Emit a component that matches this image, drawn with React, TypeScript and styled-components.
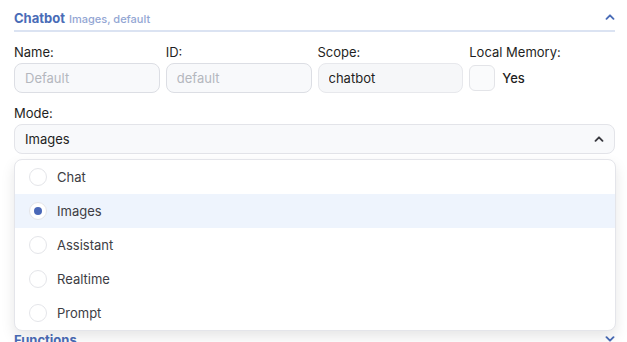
import React, { useState } from "react";
import styled, { createGlobalStyle } from "styled-components";

const GlobalStyle = createGlobalStyle`
  html, body {
    margin: 0;
    padding: 0;
    background: #ffffff;
    font-family: Inter, "Liberation Sans", sans-serif;
    -webkit-font-smoothing: antialiased;
  }
  * {
    box-sizing: border-box;
  }
`;

const Page = styled.div`
  padding: 1px 12px 0 14px;
`;

const Section = styled.section`
  position: relative;
`;

const SectionHeader = styled.div`
  display: flex;
  align-items: center;
  justify-content: space-between;
  height: 25px;
  margin-top: 6px;
  border-bottom: 2px solid #dbe3f2;
`;

const Title = styled.div`
  display: flex;
  align-items: baseline;
  gap: 4px;
  padding-top: 1px;
  padding-bottom: 3px;
`;

const TitleMain = styled.span`
  font-size: 13px;
  font-weight: 700;
  color: #4a6cb7;
`;

const TitleSub = styled.span`
  font-size: 11px;
  font-weight: 500;
  color: #93a6d3;
`;

const ChevronButton = styled.span<{ $down?: boolean }>`
  display: flex;
  width: 12px;
  height: 12px;
  margin-right: -1px;
  margin-bottom: 3px;
  color: #4a6cb7;
  transform: ${(p) => (p.$down ? "rotate(180deg)" : "none")};
`;

const Body = styled.div`
  padding-top: 12px;
  padding-bottom: 169px;
`;

const FieldGrid = styled.div`
  display: grid;
  grid-template-columns: repeat(4, 1fr);
  column-gap: 6px;
`;

const Field = styled.div`
  display: flex;
  flex-direction: column;
  gap: 3px;
`;

const Label = styled.label`
  font-size: 13px;
  line-height: 16px;
  color: #1f1f23;
`;

const Input = styled.input`
  height: 30px;
  width: 100%;
  padding: 0 10px;
  border: 1px solid #dcdee4;
  border-radius: 8px;
  background: #f8f9fb;
  font-family: inherit;
  font-size: 13px;
  color: #1f1f23;
  outline: none;

  &::placeholder {
    color: #b4b7be;
  }

  &:read-only {
    border-color: #e7e8ec;
    background: #f6f7f9;
  }
`;

const CheckRow = styled.div`
  display: flex;
  align-items: center;
  gap: 7px;
  height: 30px;
`;

const CheckBox = styled.span`
  width: 26px;
  height: 26px;
  border: 1px solid #e3e4e8;
  border-radius: 6px;
  background: #fafbfc;
`;

const CheckText = styled.span`
  font-size: 13px;
  font-weight: 500;
  color: #1f1f23;
`;

const ModeField = styled(Field)`
  position: relative;
  margin-top: 12px;
`;

const SelectBox = styled.div`
  display: flex;
  align-items: center;
  justify-content: space-between;
  height: 30px;
  padding: 0 8px 0 10px;
  border: 1px solid #e3e4e9;
  border-radius: 8px;
  background: #f8f9fb;
  font-size: 13px;
  color: #1f1f23;
`;

const SelectChevron = styled.span`
  display: flex;
  width: 12px;
  height: 12px;
  margin-right: 1px;
  color: #3a3a40;
`;

const Menu = styled.ul`
  position: absolute;
  top: 54px;
  left: 0;
  right: -1px;
  margin: 0;
  padding: 0;
  list-style: none;
  background: #ffffff;
  border: 1px solid #e4e5ea;
  border-radius: 8px;
  box-shadow: 0 6px 14px rgba(0, 0, 0, 0.1);
  overflow: hidden;
  z-index: 10;
`;

const MenuItem = styled.li<{ $active?: boolean }>`
  display: flex;
  align-items: center;
  gap: 10px;
  height: 34px;
  padding-left: 14px;
  background: ${(p) => (p.$active ? "#eef4fd" : "transparent")};
  font-size: 13px;
  color: #3d3d44;
`;

const Radio = styled.span<{ $checked?: boolean }>`
  display: flex;
  align-items: center;
  justify-content: center;
  width: 18px;
  height: 18px;
  border: 1px solid #e4e5e9;
  border-radius: 50%;
  background: #ffffff;

  &::after {
    content: "";
    display: ${(p) => (p.$checked ? "block" : "none")};
    width: 8px;
    height: 8px;
    border-radius: 50%;
    background: #4a68b8;
  }
`;

const Chevron = () => (
  <svg viewBox="0 0 12 12" width="12" height="12" fill="none">
    <path
      d="M2.5 7.8L6 4.3l3.5 3.5"
      stroke="currentColor"
      strokeWidth="1.9"
      strokeLinecap="round"
      strokeLinejoin="round"
    />
  </svg>
);

const modes = ["Chat", "Images", "Assistant", "Realtime", "Prompt"];

export default function App() {
  const [mode, setMode] = useState("Images");

  return (
    <>
      <GlobalStyle />
      <Page>
        <Section>
          <SectionHeader>
            <Title>
              <TitleMain>Chatbot</TitleMain>
              <TitleSub>{mode}, default</TitleSub>
            </Title>
            <ChevronButton>
              <Chevron />
            </ChevronButton>
          </SectionHeader>
          <Body>
            <FieldGrid>
              <Field>
                <Label>Name:</Label>
                <Input placeholder="Default" />
              </Field>
              <Field>
                <Label>ID:</Label>
                <Input placeholder="default" />
              </Field>
              <Field>
                <Label>Scope:</Label>
                <Input value="chatbot" readOnly />
              </Field>
              <Field>
                <Label>Local Memory:</Label>
                <CheckRow>
                  <CheckBox />
                  <CheckText>Yes</CheckText>
                </CheckRow>
              </Field>
            </FieldGrid>
            <ModeField>
              <Label>Mode:</Label>
              <SelectBox>
                <span>{mode}</span>
                <SelectChevron>
                  <Chevron />
                </SelectChevron>
              </SelectBox>
              <Menu>
                {modes.map((m) => (
                  <MenuItem key={m} $active={m === mode} onClick={() => setMode(m)}>
                    <Radio $checked={m === mode} />
                    {m}
                  </MenuItem>
                ))}
              </Menu>
            </ModeField>
          </Body>
        </Section>
        <Section>
          <SectionHeader>
            <Title>
              <TitleMain>Functions</TitleMain>
            </Title>
            <ChevronButton $down>
              <Chevron />
            </ChevronButton>
          </SectionHeader>
        </Section>
      </Page>
    </>
  );
}
